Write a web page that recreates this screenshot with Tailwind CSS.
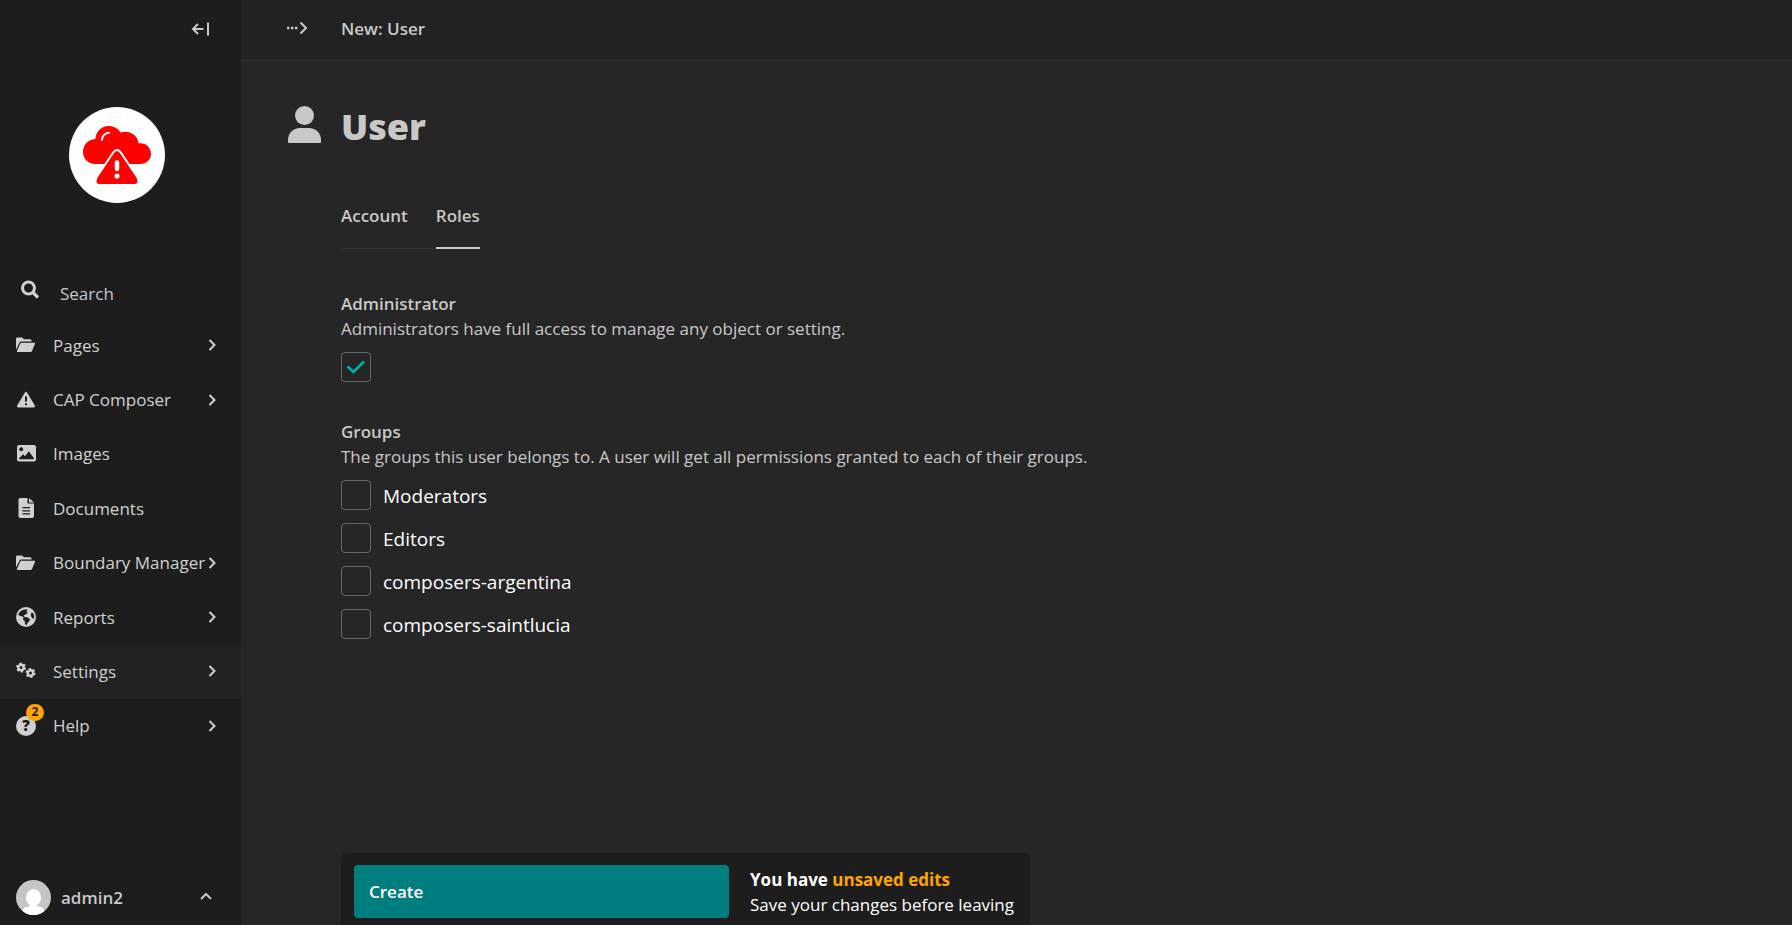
<!DOCTYPE html>
<html lang="en">
<head>
<meta charset="utf-8">
<meta name="viewport" content="width=device-width, initial-scale=1">
<title>New: User</title>
<script src="https://cdn.jsdelivr.net/npm/@tailwindcss/browser@4"></script>
</head>
<body class="flex h-screen bg-[#262626] font-['Open_Sans','Noto_Sans',sans-serif] text-[17px] leading-[25px] text-[#c8c8c8]">

<svg class="hidden" aria-hidden="true">
  <symbol id="chevron" viewBox="0 0 8 12"><path d="M1.500 1L6.500 6L1.500 11" fill="none" stroke="currentColor" stroke-width="2"/></symbol>
  <symbol id="folder" viewBox="0 0 20 16"><path fill="currentColor" d="M0 1.800Q0 .500 1.300 .500H6L8 2.300H14.200Q15.600 2.300 15.700 4.600H5.500Q4 4.600 3.300 6L0 12.600ZM5.700 5.800H18.400Q19.400 5.800 19 6.800L16 14Q15.600 15 14.500 15H1.500Q.500 15 .900 14L4 7Q4.500 5.800 5.700 5.800Z"/></symbol>
</svg>

<aside class="flex w-[241px] shrink-0 flex-col bg-[#1d1d1d]">
  <div class="flex justify-end pt-[19px] pr-[31px]">
    <button type="button" aria-label="Collapse sidebar" class="flex h-5 w-5 items-center justify-center">
      <svg class="h-4 w-5" viewBox="0 0 20 16" fill="none" stroke="currentColor" stroke-width="2"><path d="M13.500 8H3M8 3L3 8L8 13"/><path d="M18 1.500V14.500"/></svg>
    </button>
  </div>
  <a href="#" aria-label="Dashboard" class="mt-[68px] ml-[69px] flex h-24 w-24 items-center justify-center rounded-full bg-white">
    <svg class="h-24 w-24" viewBox="0 0 96 96">
      <path fill="#f00" d="M26.500 57C19 57 14 51.500 14 45C14 38 19 32.500 26.300 32C27 24.500 32.500 19 39.500 19C44.500 19 49 21.500 51.500 25.500C60 22.500 69 28 69.500 36.500C76.500 35.500 82 40.500 82 47C82 52.500 77.500 57 71.500 57Z"/>
      <path fill="none" stroke="#fff" stroke-width="2" stroke-linecap="round" d="M33 33C33 29 36 26 40 25.800"/>
      <path fill="#f00" stroke="#fff" stroke-width="2" d="M43.500 46.500Q48 39.500 52.500 46.500L68.500 70.500Q71.500 78 65 78H31Q24.500 78 27.500 70.500Z"/>
      <path stroke="#fff" stroke-width="4.500" stroke-linecap="round" d="M48 55.500V62"/>
      <circle cx="48" cy="69" r="2.600" fill="#fff"/>
    </svg>
  </a>

  <button type="button" class="mt-[62px] flex h-[53px] items-center gap-5 pl-5 text-left">
    <svg class="mb-1 h-5 w-5 text-[#d0d0d0]" viewBox="0 0 20 20" fill="none" stroke="currentColor"><circle cx="8.500" cy="8" r="6" stroke-width="3"/><path d="M12.800 12.300L18 17.500" stroke-width="3.200"/></svg>
    <span class="mt-1">Search</span>
  </button>

  <nav class="grid h-[435px] grid-rows-8 text-[#d0d0d0]" aria-label="Main">
    <a href="#" class="flex items-center gap-[17px] pr-[25px] pl-4">
      <svg class="h-4 w-5 shrink-0"><use href="#folder"/></svg><span class="grow">Pages</span><svg class="h-3 w-2 shrink-0"><use href="#chevron"/></svg>
    </a>
    <a href="#" class="flex items-center gap-[17px] pr-[25px] pl-4">
      <svg class="h-5 w-5 shrink-0" viewBox="0 0 20 20"><path fill="currentColor" fill-rule="evenodd" d="M8.800 2.700Q10 1 11.200 2.700L18.700 15.300Q19.500 17.500 17.500 17.500H2.500Q.500 17.500 1.300 15.300ZM9 6.500V11.500H11V6.500ZM9 13.200V15.200H11V13.200Z"/></svg><span class="grow">CAP Composer</span><svg class="h-3 w-2 shrink-0"><use href="#chevron"/></svg>
    </a>
    <a href="#" class="flex items-center gap-[17px] pr-[25px] pl-4">
      <svg class="h-5 w-5 shrink-0" viewBox="0 0 20 20"><path fill="currentColor" fill-rule="evenodd" d="M3 1H18Q20 1 20 3V15.500Q20 17.500 18 17.500H3Q1 17.500 1 15.500V3Q1 1 3 1ZM5.200 3.300A2 2 0 1 0 5.200 7.300A2 2 0 1 0 5.200 3.300ZM3.200 15.200H17.800V14L12.800 7.200L9 12.300L7 10.300L3.200 14.200Z"/></svg><span class="grow">Images</span>
    </a>
    <a href="#" class="flex items-center gap-[17px] pr-[25px] pl-4">
      <svg class="h-5 w-5 shrink-0" viewBox="0 0 20 20"><path fill="currentColor" fill-rule="evenodd" d="M4 0H11.500V5.500H18V18Q18 20 16 20H4.500Q2.500 20 2.500 18V1.500Q2.500 0 4 0ZM13 0L18 4.500H13ZM6.500 9H14V10.200H6.500ZM6.500 12.200H14V13.400H6.500ZM6.500 15.300H14V16.500H6.500Z"/></svg><span class="grow">Documents</span>
    </a>
    <a href="#" class="flex items-center gap-[17px] pr-[25px] pl-4">
      <svg class="h-4 w-5 shrink-0"><use href="#folder"/></svg><span class="grow whitespace-nowrap">Boundary Manager</span><svg class="-ml-4 h-3 w-2 shrink-0"><use href="#chevron"/></svg>
    </a>
    <a href="#" class="flex items-center gap-[17px] pr-[25px] pl-4">
      <svg class="h-5 w-5 shrink-0" viewBox="0 0 20 20"><circle cx="10" cy="10" r="10" fill="currentColor"/><path fill="#1d1d1d" d="M2.200 7.500Q4 3.500 8.300 2.400L11.500 2.600L10.500 5L12 5.800L9.500 7.600L7.500 8.500L8.800 9.800L7 10L5.500 9L4.500 9.300ZM7.300 10.300L10.500 10L14 12L13.400 14L11.500 16L10.500 18.300L9 17L8.700 14L7 12.500ZM15.500 5.500L17.300 6.200L18.400 9.500L17.500 12L15.600 10.500L14.800 8Z"/></svg><span class="grow">Reports</span><svg class="h-3 w-2 shrink-0"><use href="#chevron"/></svg>
    </a>
    <a href="#" class="flex items-center gap-[17px] bg-[#222222] pr-[25px] pl-4">
      <svg class="h-5 w-5 shrink-0" viewBox="0 0 20 20" fill="none" stroke="currentColor"><circle cx="5" cy="6.500" r="2.700" stroke-width="2.400"/><circle cx="5" cy="6.500" r="4.200" stroke-width="1.600" stroke-dasharray="2.200 2.200"/><circle cx="14.500" cy="12" r="2.700" stroke-width="2.400"/><circle cx="14.500" cy="12" r="4.200" stroke-width="1.600" stroke-dasharray="2.200 2.200"/></svg><span class="grow">Settings</span><svg class="h-3 w-2 shrink-0"><use href="#chevron"/></svg>
    </a>
    <a href="#" class="flex items-center gap-[17px] pr-[25px] pl-4">
      <span class="relative flex h-5 w-5 shrink-0 items-center justify-center rounded-full bg-[#d0d0d0] text-[15px] font-extrabold text-[#1d1d1d]">?<span class="absolute -top-3 left-[10px] flex h-[17px] w-[18px] items-center justify-center rounded-full bg-[#ffa500] text-xs font-bold">2</span></span><span class="grow">Help</span><svg class="h-3 w-2 shrink-0"><use href="#chevron"/></svg>
    </a>
  </nav>

  <button type="button" class="mt-auto mb-[10px] flex items-center gap-[10px] pr-[29px] pl-4 text-left font-semibold">
    <svg class="h-[35px] w-[35px] shrink-0 rounded-full" viewBox="0 0 35 35"><path fill="#c5c5c5" d="M0 0H35V35H0Z"/><ellipse cx="17.500" cy="17.700" rx="7.500" ry="8.700" fill="#fff"/><path fill="#fff" d="M14 23H21V26L26 27.500Q29 29 29 35H6Q6 29 9 27.500L14 26Z"/></svg>
    <span class="grow">admin2</span>
    <svg class="mb-1 h-2 w-3" viewBox="0 0 12 8" fill="none" stroke="currentColor" stroke-width="2"><path d="M1 7L6 2L11 7"/></svg>
  </button>
</aside>

<div class="flex min-w-0 grow flex-col">
  <header class="flex h-[61px] shrink-0 items-center border-b border-[#333333] bg-[#222222] pb-1 pl-[46px]">
    <button type="button" aria-label="Show breadcrumbs" class="w-[54px]">
      <svg class="h-4 w-5" viewBox="0 0 20 16"><path fill="currentColor" d="M0 6.800h2.400v2.400H0ZM4 6.800h2.400v2.400H4ZM8 6.800h2.400v2.400H8Z"/><path d="M13.500 2.500L19 8L13.500 13.500" fill="none" stroke="currentColor" stroke-width="2"/></svg>
    </button>
    <span class="font-semibold">New: User</span>
  </header>

  <main class="flex grow flex-col pl-[47px]">
    <div class="mt-[42px] flex h-12 items-center">
      <div class="w-[53px] shrink-0 pb-1">
        <svg class="h-[38px] w-[33px]" viewBox="0 0 33 38" fill="currentColor"><circle cx="16.500" cy="9.500" r="9.500"/><path d="M0 36V34C0 27 5 22 12 22H21C28 22 33 27 33 34V36Q33 37 32 37H1Q0 37 0 36Z"/></svg>
      </div>
      <h1 class="text-4xl leading-[48px] font-extrabold">User</h1>
    </div>

    <div class="ml-[53px] flex grow flex-col">
      <div role="tablist" class="mt-[52px] flex self-start font-semibold">
        <button type="button" role="tab" aria-selected="false" class="flex h-[46px] items-start border-b border-[#333333] pr-7">Account</button>
        <button type="button" role="tab" aria-selected="true" class="flex h-[46px] items-start border-b-2 border-[#c8c8c8]">Roles</button>
      </div>

      <section class="mt-[42px]">
        <label for="admin" class="block font-semibold">Administrator</label>
        <p id="admin-help">Administrators have full access to manage any object or setting.</p>
        <div class="mt-[11px] grid h-[30px] w-[30px]">
          <input id="admin" type="checkbox" checked aria-describedby="admin-help" class="peer col-start-1 row-start-1 h-[30px] w-[30px] appearance-none rounded border border-[#666666]">
          <svg class="pointer-events-none col-start-1 row-start-1 hidden h-[30px] w-[30px] peer-checked:block" viewBox="0 0 30 30" fill="none" stroke="#00b0b1" stroke-width="2.600"><path d="M6.500 14.500L12.500 20L23 9.500"/></svg>
        </div>
      </section>

      <fieldset class="mt-[37px]">
        <legend class="font-semibold">Groups</legend>
        <p>The groups this user belongs to. A user will get all permissions granted to each of their groups.</p>
        <div class="mt-[11px] flex flex-col gap-[13px] text-[19px] text-white">
          <label class="flex h-[30px] items-center gap-3"><input type="checkbox" class="h-[30px] w-[30px] appearance-none rounded border border-[#666666]"><span class="pt-[2px]">Moderators</span></label>
          <label class="flex h-[30px] items-center gap-3"><input type="checkbox" class="h-[30px] w-[30px] appearance-none rounded border border-[#666666]"><span class="pt-[2px]">Editors</span></label>
          <label class="flex h-[30px] items-center gap-3"><input type="checkbox" class="h-[30px] w-[30px] appearance-none rounded border border-[#666666]"><span class="pt-[2px]">composers-argentina</span></label>
          <label class="flex h-[30px] items-center gap-3"><input type="checkbox" class="h-[30px] w-[30px] appearance-none rounded border border-[#666666]"><span class="pt-[2px]">composers-saintlucia</span></label>
        </div>
      </fieldset>

      <footer class="mt-auto flex items-center gap-[21px] self-start rounded-t-md bg-[#1d1d1d] pt-3 pr-4 pb-[7px] pl-[13px] text-white">
        <button type="submit" class="h-[53px] w-[375px] rounded bg-[#007d7e] px-[15px] text-left font-semibold">Create</button>
        <p><strong class="block font-bold">You have <span class="text-[#ffa500]">unsaved edits</span></strong>Save your changes before leaving</p>
      </footer>
    </div>
  </main>
</div>
</body>
</html>
